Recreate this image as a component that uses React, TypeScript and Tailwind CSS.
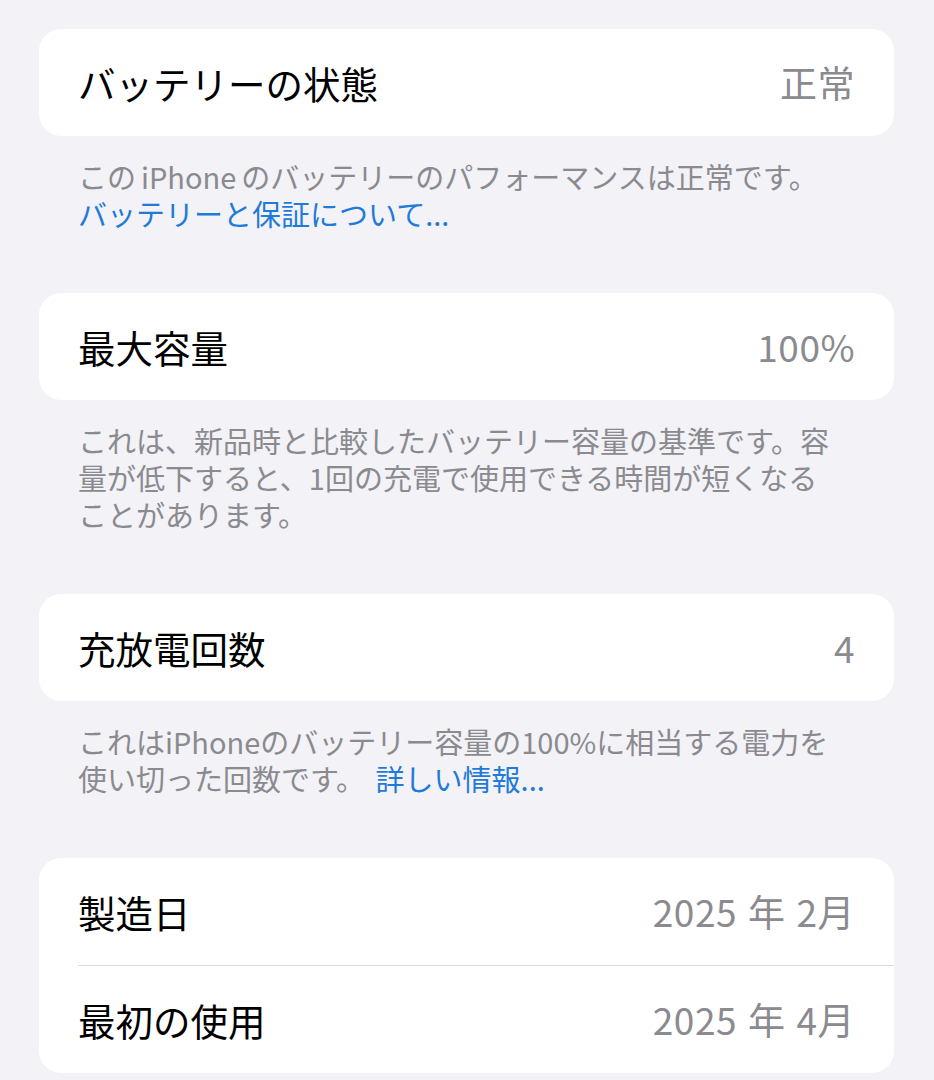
import React from 'react';

const font = { fontFamily: '"Noto Sans CJK JP", "Noto Sans", sans-serif' };

interface Row {
  label: string;
  value: React.ReactNode;
}

const Card = ({ rows }: { rows: Row[] }) => (
  <div className="bg-white rounded-[22px]">
    {rows.map((row, i) => (
      <div key={row.label}>
        {i > 0 && <div className="ml-[39px] h-px bg-[#d9d9de]" />}
        <div className="flex items-center justify-between h-[107px] pl-[39px] pr-[39px]">
          <span className="text-[37.5px] text-black leading-none">{row.label}</span>
          <span className="text-[37px] text-[#8a8a8f] leading-none tracking-[0.5px]">{row.value}</span>
        </div>
      </div>
    ))}
  </div>
);

const Footer = ({ children }: { children: React.ReactNode }) => (
  <div className="pt-[22px] px-[39px] text-[29px] leading-[37px] text-[#8a8a8f]">{children}</div>
);

const Link = ({ children }: { children: React.ReactNode }) => (
  <span className="text-[#1f7ad8]">{children}</span>
);

const Month = ({ year, month }: { year: string; month: string }) => (
  <>
    {year}
    <span className="mx-[11px]">年</span>
    {month}
  </>
);

export default function App() {
  return (
    <div className="min-h-screen bg-[#f2f2f7] pt-[29px] pl-[39px] pr-[40px]" style={font}>
      <section className="mb-[61px]">
        <Card rows={[{ label: 'バッテリーの状態', value: '正常' }]} />
        <Footer>
          <span className="block">
            この<span className="mx-[5px]">iPhone</span>のバッテリーのパフォーマンスは正常です。
          </span>
          <span className="block">
            <Link>バッテリーと保証について...</Link>
          </span>
        </Footer>
      </section>

      <section className="mb-[61px]">
        <Card rows={[{ label: '最大容量', value: '100%' }]} />
        <Footer>
          <span className="block">これは、新品時と比較したバッテリー容量の基準です。容</span>
          <span className="block">量が低下すると、1回の充電で使用できる時間が短くなる</span>
          <span className="block">ことがあります。</span>
        </Footer>
      </section>

      <section className="mb-[61px]">
        <Card rows={[{ label: '充放電回数', value: '4' }]} />
        <Footer>
          <span className="block">これはiPhoneのバッテリー容量の100%に相当する電力を</span>
          <span className="block">
            使い切った回数です。 <span className="ml-[4px]"><Link>詳しい情報...</Link></span>
          </span>
        </Footer>
      </section>

      <section>
        <Card
          rows={[
            { label: '製造日', value: <Month year="2025" month="2月" /> },
            { label: '最初の使用', value: <Month year="2025" month="4月" /> },
          ]}
        />
      </section>
    </div>
  );
}
